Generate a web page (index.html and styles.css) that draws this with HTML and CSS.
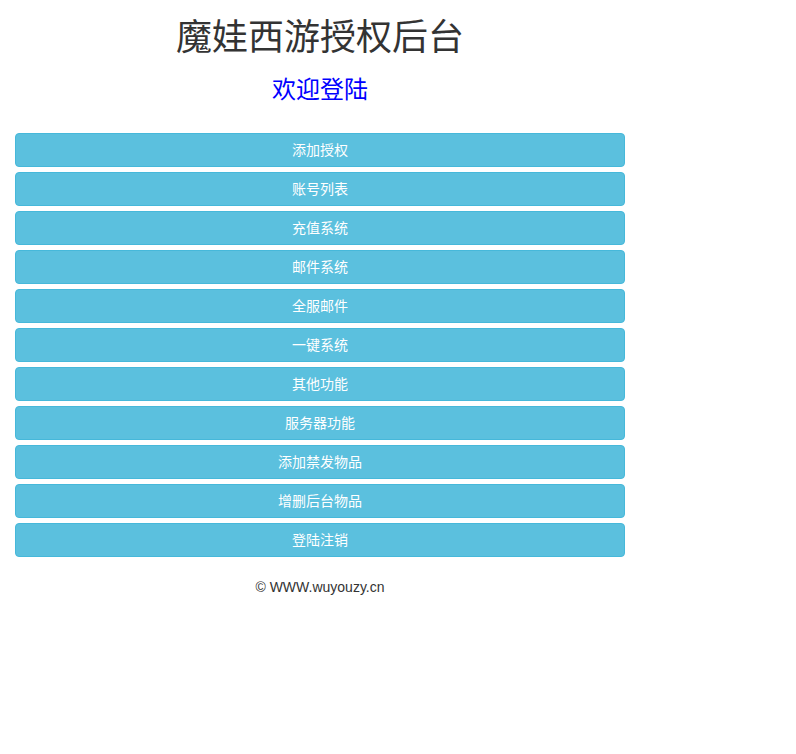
FILE: index.html
```html
<!DOCTYPE html>
<html>
<head>
<meta charset="utf-8">
<title>魔娃西游授权后台</title>
<link rel="stylesheet" href="styles.css">
</head>
<body>
<div class="container">
  <h1 class="title">魔娃西游授权后台</h1>
  <h3 class="welcome">欢迎登陆</h3>
  <div class="menu">
    <a class="btn" href="#">添加授权</a>
    <a class="btn" href="#">账号列表</a>
    <a class="btn" href="#">充值系统</a>
    <a class="btn" href="#">邮件系统</a>
    <a class="btn" href="#">全服邮件</a>
    <a class="btn" href="#">一键系统</a>
    <a class="btn" href="#">其他功能</a>
    <a class="btn" href="#">服务器功能</a>
    <a class="btn" href="#">添加禁发物品</a>
    <a class="btn" href="#">增删后台物品</a>
    <a class="btn" href="#">登陆注销</a>
  </div>
  <p class="footer">© WWW.wuyouzy.cn</p>
</div>
</body>
</html>
```
FILE: styles.css
```css
html, body {
  margin: 0;
  padding: 0;
  background: #fff;
}
body {
  font-family: "Liberation Sans", Arial, "Noto Sans CJK SC", sans-serif;
  font-size: 14px;
  line-height: 1.42857;
  color: #333;
}
.container {
  width: 640px;
  box-sizing: border-box;
  padding: 0 15px;
}
.title {
  margin: 18px 0 0;
  font-size: 36px;
  font-weight: 400;
  line-height: 40px;
  text-align: center;
  color: #333;
}
.welcome {
  margin: 19px 0 0;
  font-size: 24px;
  font-weight: 400;
  line-height: 26px;
  text-align: center;
  color: #0000ff;
}
.menu {
  margin-top: 30px;
  display: flex;
  flex-direction: column;
  gap: 5px;
}
.btn {
  display: block;
  box-sizing: border-box;
  height: 34px;
  padding: 6px 12px;
  font-size: 14px;
  line-height: 20px;
  text-align: center;
  color: #fff;
  text-decoration: none;
  background: #5bc0de;
  border: 1px solid #46b8da;
  border-radius: 4px;
}
.footer {
  margin: 20px 0 0;
  text-align: center;
  font-size: 14px;
  line-height: 20px;
  color: #333;
}
```
